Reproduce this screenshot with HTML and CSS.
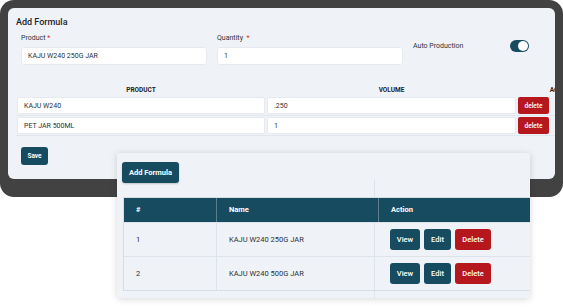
FILE: index.html
```html
<!DOCTYPE html>
<html lang="en">
<head>
    <meta charset="UTF-8">
    <meta name="viewport" content="width=device-width, initial-scale=1.0">
    <title>Add Formula</title>
    <link rel="stylesheet" href="styles.css">
</head>
<body>
    <div class="frame">
        <div class="panel">
            <h2 class="title">Add Formula</h2>

            <div class="form-row">
                <div class="field">
                    <label>Product <span class="req">*</span></label>
                    <input class="input" type="text" value="KAJU W240 250G JAR">
                </div>
                <div class="field">
                    <label>Quantity &nbsp;<span class="req">*</span></label>
                    <input class="input" type="text" value="1">
                </div>
                <div class="auto">
                    <span>Auto Production</span>
                    <span class="toggle"><span class="knob"></span></span>
                </div>
            </div>

            <div class="items">
                <div class="items-head">
                    <span>PRODUCT</span>
                    <span>VOLUME</span>
                    <span>ACTION</span>
                </div>
                <div class="items-row">
                    <div class="cell"><input class="input small" type="text" value="KAJU W240"></div>
                    <div class="cell"><input class="input small" type="text" value=".250"></div>
                    <div class="cell"><button class="btn-del">delete</button></div>
                </div>
                <div class="items-row">
                    <div class="cell"><input class="input small" type="text" value="PET JAR 500ML"></div>
                    <div class="cell"><input class="input small" type="text" value="1"></div>
                    <div class="cell"><button class="btn-del">delete</button></div>
                </div>
            </div>

            <button class="btn save">Save</button>
        </div>
    </div>

    <div class="card">
        <span class="card-line"></span>
        <button class="btn add">Add Formula</button>
        <div class="list">
            <div class="list-head">
                <span>#</span>
                <span>Name</span>
                <span>Action</span>
            </div>
            <div class="list-row">
                <span>1</span>
                <span>KAJU W240 250G JAR</span>
                <span class="actions">
                    <button class="btn act view">View</button>
                    <button class="btn act edit">Edit</button>
                    <button class="btn act red">Delete</button>
                </span>
            </div>
            <div class="list-row">
                <span>2</span>
                <span>KAJU W240 500G JAR</span>
                <span class="actions">
                    <button class="btn act view">View</button>
                    <button class="btn act edit">Edit</button>
                    <button class="btn act red">Delete</button>
                </span>
            </div>
        </div>
    </div>
</body>
</html>
```

FILE: styles.css
```css
*{
    box-sizing: border-box;
}

body{
    margin: 0;
    background: #ffffff;
    font-family: Roboto, "Liberation Sans", Arial, sans-serif;
    color: #2b2f33;
    position: relative;
    width: 563px;
    height: 308px;
    overflow: hidden;
}

/* screen frame */
.frame{
    width: 563px;
    height: 197px;
    background: #424242;
    border-radius: 14px;
    padding: 8px 8px 18px 8px;
}

.panel{
    height: 100%;
    background: #eff3f8;
    border-radius: 6px;
    padding: 7px 0 0 8px;
    overflow: hidden;
}

.title{
    margin: 0;
    font-size: 9px;
    line-height: 14px;
    font-weight: 500;
    color: #1f2327;
}

.form-row{
    display: grid;
    grid-template-columns: 186px 186px 116px;
    column-gap: 10px;
    margin: 4px 0 0 5px;
}

.field label{
    display: block;
    font-size: 7px;
    line-height: 10px;
    color: #2d3338;
    margin-bottom: 4px;
}

.req{
    color: #e0201f;
}

.input{
    display: block;
    width: 100%;
    height: 18px;
    border: 1px solid #e6eaef;
    border-radius: 3px;
    background: #ffffff;
    padding: 0 6px;
    font-family: inherit;
    font-size: 7px;
    color: #2b2f33;
    outline: none;
}

.input.small{
    height: 17px;
    border-radius: 2px;
}

.auto{
    display: flex;
    align-items: center;
    justify-content: space-between;
    height: 12px;
    margin-top: 7px;
    font-size: 7px;
    color: #2d3338;
}

.toggle{
    width: 19px;
    height: 12px;
    border-radius: 6px;
    background: #174c60;
    display: flex;
    justify-content: flex-end;
    align-items: center;
    padding: 0 1px;
}

.knob{
    width: 10px;
    height: 10px;
    border-radius: 50%;
    background: #ffffff;
}

/* formula items */
.items{
    margin-top: 19px;
    width: 590px;
}

.items-head,
.items-row{
    display: grid;
    grid-template-columns: 250px 251px 89px;
}

.items-head{
    height: 12px;
    line-height: 12px;
    font-size: 6.5px;
    font-weight: 700;
    text-align: center;
    color: #1f2327;
}

.items-row{
    height: 20px;
    border-bottom: 1px solid #e2e7ed;
}

.cell{
    padding: 1px;
}

.btn-del{
    display: block;
    width: 31px;
    height: 17px;
    border: none;
    border-radius: 2px;
    background: #b5171c;
    color: #ffffff;
    font-family: inherit;
    font-size: 6.5px;
    font-weight: 500;
    padding: 0;
}

.btn{
    border: none;
    border-radius: 3px;
    background: #174c60;
    color: #ffffff;
    font-family: inherit;
    font-weight: 700;
    padding: 0;
}

.save{
    display: block;
    width: 27px;
    height: 18px;
    margin: 11px 0 0 5px;
    font-size: 6.5px;
}

/* list card over the screen */
.card{
    position: absolute;
    left: 117px;
    top: 153px;
    width: 413px;
    height: 145px;
    background: #eff3f8;
    border-radius: 2px;
    box-shadow: 0 1px 7px rgba(0, 0, 0, 0.16);
    padding: 9px 0 0 5px;
    overflow: hidden;
}

.card-line{
    position: absolute;
    left: 257px;
    top: 27px;
    width: 1px;
    height: 140px;
    background: #dde3e9;
}

.add{
    display: block;
    width: 57px;
    height: 21px;
    font-size: 7.5px;
    box-shadow: 0 1px 2px rgba(0, 0, 0, 0.2);
}

.list{
    position: relative;
    margin: 14px 0 0 1px;
    width: 420px;
    border: 1px solid #d7dde4;
    border-right: none;
}

.list-head{
    display: grid;
    grid-template-columns: 92px 162px 1fr;
    height: 24px;
    background: #174c60;
    color: #ffffff;
    font-size: 7.5px;
    font-weight: 700;
}

.list-head span{
    padding-left: 12px;
    line-height: 24px;
    border-left: 1px solid #5c7e8c;
}

.list-head span:first-child{
    border-left: none;
}

.list-row{
    display: grid;
    grid-template-columns: 92px 158px 1fr;
    height: 34px;
    border-top: 1px solid #dde3e9;
    font-size: 7.5px;
    color: #2b2f33;
}

.list-row > span{
    display: flex;
    align-items: center;
    padding-left: 12px;
    border-left: 1px solid #dde3e9;
}

.list-row > span:first-child{
    border-left: none;
}

.list-row > span.actions{
    gap: 4px;
    padding-left: 15px;
}

.act{
    height: 21px;
    font-size: 7.5px;
    font-weight: 500;
}

.act.view{
    width: 30px;
}

.act.edit{
    width: 27px;
}

.act.red{
    width: 36px;
    background: #b5171c;
}
```
